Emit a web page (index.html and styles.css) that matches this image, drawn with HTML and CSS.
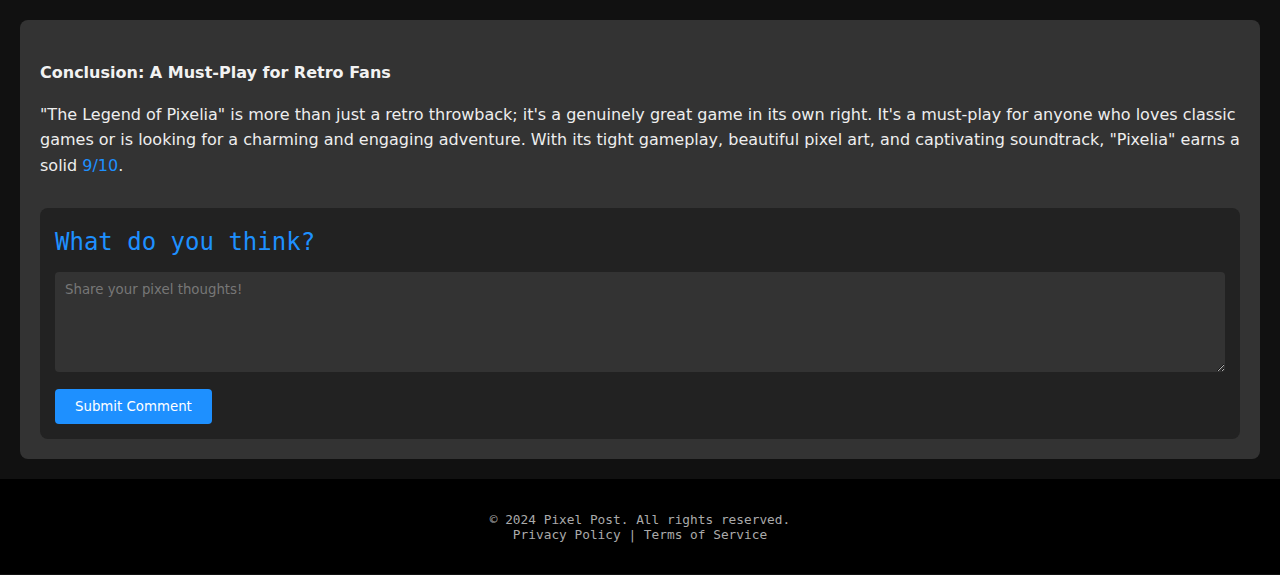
FILE: index.html
```html
<!DOCTYPE html>
<html lang="en">
<head>
<meta charset="utf-8">
<title>Pixel Post</title>
<link rel="stylesheet" href="styles.css">
</head>
<body>
<main class="main">
  <article class="card">
    <h4 class="conclusion-title">Conclusion: A Must-Play for Retro Fans</h4>
    <p class="conclusion-text">"The Legend of Pixelia" is more than just a retro throwback; it's a genuinely great game in its own right. It's a must-play for anyone who loves classic games or is looking for a charming and engaging adventure. With its tight gameplay, beautiful pixel art, and captivating soundtrack, "Pixelia" earns a solid <a class="score" href="#">9/10</a>.</p>
    <section class="comments">
      <h3 class="comments-title">What do you think?</h3>
      <textarea class="comment-input" placeholder="Share your pixel thoughts!"></textarea>
      <button class="submit-btn" type="button">Submit Comment</button>
    </section>
  </article>
</main>
<footer class="footer">
  <p class="footer-text">© 2024 Pixel Post. All rights reserved.<br><a href="#">Privacy Policy</a> | <a href="#">Terms of Service</a></p>
</footer>
</body>
</html>
```
FILE: styles.css
```css
html, body {
  margin: 0;
  padding: 0;
}
body {
  background: #111111;
  color: #eeeeee;
  font-family: "DejaVu Sans", sans-serif;
  font-size: 16px;
}
.main {
  padding: 20px;
}
.card {
  background: #333333;
  border-radius: 8px;
  padding: 20px;
}
.conclusion-title {
  font-size: 16px;
  font-weight: bold;
  color: #f2f2f2;
  margin: 23.3px 0 19.3px;
}
.conclusion-text {
  margin: 0;
  line-height: 1.6;
}
.score {
  color: #1e90ff;
  text-decoration: none;
}
.comments {
  margin-top: 30px;
  background: #222222;
  border-radius: 8px;
  padding: 15px;
}
.comments-title {
  margin: 0 0 10px;
  font-family: "DejaVu Sans Mono", monospace;
  font-weight: normal;
  font-size: 24px;
  line-height: 1.6;
  color: #1e90ff;
}
.comment-input {
  display: block;
  box-sizing: border-box;
  width: 100%;
  height: 100px;
  margin: 0 0 17px;
  padding: 10px;
  background: #333333;
  color: #eeeeee;
  border: none;
  border-radius: 4px;
  font-family: "DejaVu Sans", sans-serif;
  font-size: 13.33px;
}
.comment-input::placeholder {
  color: #777777;
}
.submit-btn {
  display: block;
  background: #1e90ff;
  color: #ffffff;
  border: none;
  border-radius: 4px;
  padding: 0 20px;
  height: 35px;
  font-family: "DejaVu Sans", sans-serif;
  font-size: 13.33px;
}
.footer {
  background: #000000;
  padding: 20px;
  text-align: center;
  font-family: "DejaVu Sans Mono", monospace;
  font-size: 12.8px;
  color: #aaaaaa;
}
.footer-text {
  margin: 12.8px 0;
}
.footer-text a {
  color: #aaaaaa;
  text-decoration: none;
}
```
